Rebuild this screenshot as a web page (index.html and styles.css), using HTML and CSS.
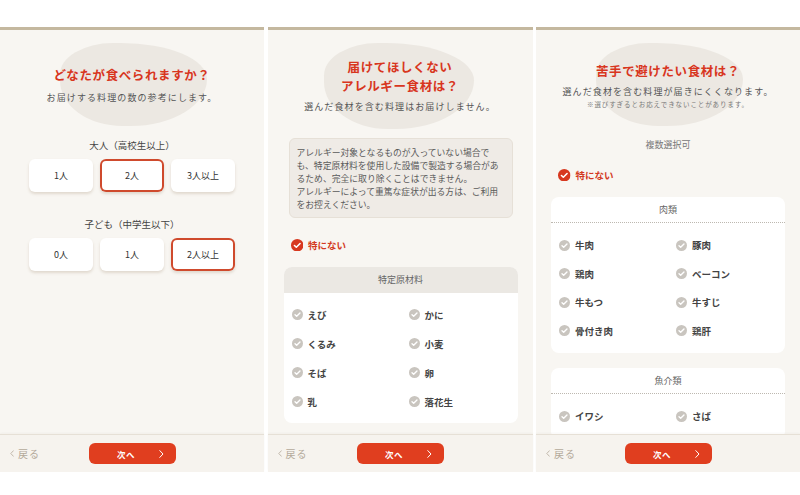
FILE: index.html
```html
<!DOCTYPE html>
<html lang="ja">
<head>
    <meta charset="UTF-8">
    <meta name="viewport" content="width=device-width, initial-scale=1.0">
    <title>食事プラン設定</title>
    <link rel="stylesheet" href="styles.css">
</head>
<body>
    <svg class="sprite" aria-hidden="true">
        <symbol id="tick" viewBox="0 0 12 12">
            <circle cx="6" cy="6" r="6"/>
            <path d="M3.3 6.2l1.8 1.7 3.6-3.6" fill="none" stroke="#fff" stroke-width="1.5" stroke-linecap="round" stroke-linejoin="round"/>
        </symbol>
        <symbol id="chevron-left" viewBox="0 0 5 8">
            <path d="M4.2 0.6L1 4l3.2 3.4" fill="none" stroke="currentColor" stroke-width="1" stroke-linecap="round" stroke-linejoin="round"/>
        </symbol>
        <symbol id="chevron-right" viewBox="0 0 5 8">
            <path d="M0.8 0.6L4 4 0.8 7.4" fill="none" stroke="currentColor" stroke-width="1" stroke-linecap="round" stroke-linejoin="round"/>
        </symbol>
    </svg>

    <div class="screens">
        <!-- 人数 -->
        <section class="screen">
            <div class="screen-body">
                <div class="intro intro-people">
                    <h2 class="intro-title">どなたが食べられますか？</h2>
                    <p class="intro-lead">お届けする料理の数の参考にします。</p>
                </div>

                <div class="count-group count-adult">
                    <p class="count-label">大人（高校生以上）</p>
                    <div class="count-options">
                        <button class="count-option">1人</button>
                        <button class="count-option is-selected">2人</button>
                        <button class="count-option">3人以上</button>
                    </div>
                </div>

                <div class="count-group count-child">
                    <p class="count-label">子ども（中学生以下）</p>
                    <div class="count-options">
                        <button class="count-option">0人</button>
                        <button class="count-option">1人</button>
                        <button class="count-option is-selected">2人以上</button>
                    </div>
                </div>
            </div>
            <footer class="screen-footer">
                <a class="back"><svg class="chev"><use href="#chevron-left"/></svg>戻る</a>
                <button class="next"><span class="next-label">次へ</span><svg class="chev"><use href="#chevron-right"/></svg></button>
            </footer>
        </section>

        <!-- アレルギー -->
        <section class="screen screen-wide">
            <div class="screen-body">
                <div class="intro intro-allergy">
                    <h2 class="intro-title">届けてほしくない<br>アレルギー食材は？</h2>
                    <p class="intro-lead">選んだ食材を含む料理はお届けしません。</p>
                </div>

                <p class="notice">
                    アレルギー対象となるものが入っていない場合で<br>
                    も、特定原材料を使用した設備で製造する場合があ<br>
                    るため、完全に取り除くことはできません。<br>
                    アレルギーによって重篤な症状が出る方は、ご利用<br>
                    をお控えください。
                </p>

                <label class="none-option none-allergy"><svg class="tick tick-on"><use href="#tick"/></svg>特にない</label>

                <div class="food-card">
                    <div class="food-head">特定原材料</div>
                    <ul class="food-items">
                        <li><svg class="tick"><use href="#tick"/></svg>えび</li>
                        <li><svg class="tick"><use href="#tick"/></svg>かに</li>
                        <li><svg class="tick"><use href="#tick"/></svg>くるみ</li>
                        <li><svg class="tick"><use href="#tick"/></svg>小麦</li>
                        <li><svg class="tick"><use href="#tick"/></svg>そば</li>
                        <li><svg class="tick"><use href="#tick"/></svg>卵</li>
                        <li><svg class="tick"><use href="#tick"/></svg>乳</li>
                        <li><svg class="tick"><use href="#tick"/></svg>落花生</li>
                    </ul>
                </div>
            </div>
            <footer class="screen-footer">
                <a class="back"><svg class="chev"><use href="#chevron-left"/></svg>戻る</a>
                <button class="next"><span class="next-label">次へ</span><svg class="chev"><use href="#chevron-right"/></svg></button>
            </footer>
        </section>

        <!-- 苦手な食材 -->
        <section class="screen">
            <div class="screen-body">
                <div class="intro intro-dislike">
                    <h2 class="intro-title">苦手で避けたい食材は？</h2>
                    <p class="intro-lead">選んだ食材を含む料理が届きにくくなります。</p>
                    <p class="intro-note">※選びすぎるとお応えできないことがあります。</p>
                </div>

                <p class="multi-note">複数選択可</p>

                <label class="none-option none-dislike"><svg class="tick tick-on"><use href="#tick"/></svg>特にない</label>

                <div class="food-card food-card-plain">
                    <div class="food-head">肉類</div>
                    <ul class="food-items">
                        <li><svg class="tick"><use href="#tick"/></svg>牛肉</li>
                        <li><svg class="tick"><use href="#tick"/></svg>豚肉</li>
                        <li><svg class="tick"><use href="#tick"/></svg>鶏肉</li>
                        <li><svg class="tick"><use href="#tick"/></svg>ベーコン</li>
                        <li><svg class="tick"><use href="#tick"/></svg>牛もつ</li>
                        <li><svg class="tick"><use href="#tick"/></svg>牛すじ</li>
                        <li><svg class="tick"><use href="#tick"/></svg>骨付き肉</li>
                        <li><svg class="tick"><use href="#tick"/></svg>鶏肝</li>
                    </ul>
                </div>

                <div class="food-card food-card-plain">
                    <div class="food-head">魚介類</div>
                    <ul class="food-items">
                        <li><svg class="tick"><use href="#tick"/></svg>イワシ</li>
                        <li><svg class="tick"><use href="#tick"/></svg>さば</li>
                    </ul>
                </div>
            </div>
            <footer class="screen-footer">
                <a class="back"><svg class="chev"><use href="#chevron-left"/></svg>戻る</a>
                <button class="next"><span class="next-label">次へ</span><svg class="chev"><use href="#chevron-right"/></svg></button>
            </footer>
        </section>
    </div>
</body>
</html>
```

FILE: styles.css
```css
body {
    margin: 0;
    background: #fff;
    font-family: "Noto Sans CJK JP", "Noto Sans", sans-serif;
    color: #444;
}

.sprite {
    position: absolute;
    width: 0;
    height: 0;
}

.screens {
    display: flex;
    justify-content: space-between;
    padding-top: 27px;
}

.screen {
    width: 264px;
    height: 445px;
    box-sizing: border-box;
    border-top: 3px solid #c4b89f;
    background: #f8f6f2;
    display: flex;
    flex-direction: column;
}

.screen-wide {
    width: 265px;
}

.screen-body {
    flex: 1;
    overflow: hidden;
}

/* 見出し＋背景のふんわりした楕円 */
.intro {
    position: relative;
    isolation: isolate;
    text-align: center;
}

.intro::before {
    content: "";
    position: absolute;
    top: 13px;
    left: 50%;
    width: 147px;
    height: 83px;
    margin-left: -72px;
    background: #ece8e2;
    border-radius: 38% 62% 55% 45% / 40% 46% 60% 58%;
    z-index: -1;
}

.intro-people { padding-top: 34.5px; }
.intro-allergy { padding-top: 26.5px; }
.intro-dislike { padding-top: 30.5px; }

.intro-allergy::before {
    height: 86px;
    width: 150px;
    margin-left: -76px;
}

.intro-title {
    margin: 0;
    font-size: 12.5px;
    line-height: 19px;
    letter-spacing: 0.6px;
    font-weight: 700;
    color: #d8361e;
}

.intro-lead {
    margin: 7px 0 0;
    font-size: 9px;
    line-height: 14px;
    letter-spacing: 1.1px;
    color: #555;
}

.intro-allergy .intro-lead,
.intro-dislike .intro-lead {
    margin-top: 5.5px;
}

.intro-note {
    margin: 0;
    font-size: 6.5px;
    line-height: 10px;
    letter-spacing: 0.9px;
    color: #777;
}

/* 人数選択 */
.count-adult { margin-top: 33.5px; }
.count-child { margin-top: 25px; }

.count-label {
    margin: 0;
    text-align: center;
    font-size: 9.5px;
    line-height: 14px;
    color: #444;
}

.count-options {
    display: grid;
    grid-template-columns: repeat(3, 64px);
    gap: 7px;
    justify-content: center;
    margin-top: 7px;
}

.count-option {
    height: 33px;
    border: 0;
    border-radius: 6px;
    background: #fff;
    box-shadow: 0 2px 3px rgba(140, 115, 80, 0.22);
    font-family: inherit;
    font-size: 9px;
    color: #333;
}

.count-option.is-selected {
    box-shadow: inset 0 0 0 2px #cf4a2d, 0 2px 3px rgba(140, 115, 80, 0.22);
}

/* 注意書き */
.notice {
    margin: 24px 20px 0 21px;
    padding: 7px 7px 6px;
    background: #efebe6;
    border: 1px solid #e6e0d7;
    border-radius: 6px;
    font-size: 8.8px;
    line-height: 13px;
    color: #5a5a5a;
    white-space: nowrap;
}

.multi-note {
    margin: 29px 0 0;
    text-align: center;
    font-size: 9px;
    line-height: 14px;
    color: #777;
}

.none-option {
    display: flex;
    align-items: center;
    gap: 5px;
    font-size: 9.5px;
    line-height: 14px;
    font-weight: 700;
    color: #d33a22;
}

.none-allergy { margin: 20px 0 0 23px; }
.none-dislike { margin: 16px 0 0 22px; }

.tick {
    width: 11px;
    height: 11px;
    fill: #c9c5bf;
    flex: none;
}

.tick-on {
    width: 12.5px;
    height: 12.5px;
    fill: #d7381f;
}

/* 食材カード */
.food-card {
    margin: 15px 15px 0 16px;
    background: #fff;
    border-radius: 8px;
    overflow: hidden;
}

.food-head {
    height: 26px;
    line-height: 26px;
    text-align: center;
    background: #ebe8e3;
    font-size: 9px;
    color: #666;
}

.food-card-plain {
    margin-left: 15px;
}

.food-card-plain .food-head {
    height: 25px;
    line-height: 25px;
    background: none;
    border-bottom: 1px dotted #bdb8b0;
}

.food-items {
    list-style: none;
    margin: 0;
    padding: 7px 0;
    display: grid;
    grid-template-columns: 1fr 1fr;
    grid-auto-rows: 29px;
}

.food-card-plain .food-items {
    padding: 8px 0;
    grid-auto-rows: 28.5px;
}

.food-items li {
    display: flex;
    align-items: center;
    gap: 5px;
    padding-left: 8px;
    font-size: 9.5px;
    font-weight: 700;
    color: #444;
}

/* フッター */
.screen-footer {
    height: 38px;
    flex: none;
    box-sizing: border-box;
    display: grid;
    grid-template-columns: 1fr 87px 1fr;
    align-items: center;
    padding: 0 10px;
    background: #f6f3ee;
    border-top: 1px solid #e6e0d6;
    box-shadow: 0 -1px 2px rgba(120, 100, 70, 0.05);
}

.back {
    display: flex;
    align-items: center;
    gap: 4px;
    font-size: 10px;
    letter-spacing: 1px;
    color: #b4aa9b;
}

.chev {
    width: 4px;
    height: 7px;
}

.next {
    height: 21px;
    border: 0;
    border-radius: 6px;
    background: #e03e1f;
    color: #fff;
    font-family: inherit;
    display: grid;
    grid-template-columns: 1fr auto 1fr;
    align-items: center;
    padding: 0 12px 0 0;
}

.next-label {
    grid-column: 2;
    font-size: 8.5px;
    font-weight: 700;
    letter-spacing: 0.5px;
}

.next .chev {
    grid-column: 3;
    justify-self: end;
    width: 5px;
    height: 8px;
}
```
